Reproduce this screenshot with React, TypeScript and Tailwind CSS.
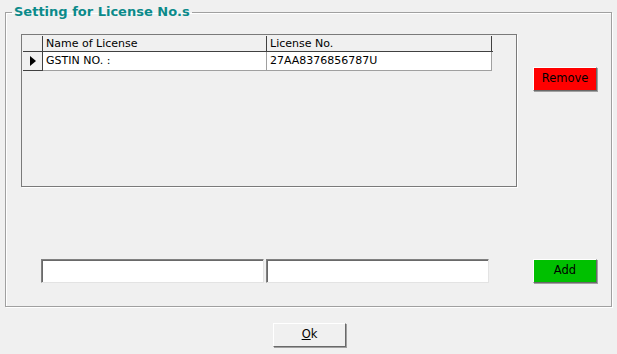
import React from 'react';

const font = { fontFamily: '"DejaVu Sans", Tahoma, sans-serif' };

function RaisedButton({ label, className }: { label: React.ReactNode; className: string }) {
  return (
    <button
      className={`flex items-center justify-center text-[11.5px] text-black border border-t-white border-l-white border-r-[#696969] border-b-[#696969] shadow-[1px_1px_0_#a0a0a0] ${className}`}
    >
      {label}
    </button>
  );
}

export default function App() {
  return (
    <div className="w-[617px] h-[354px] bg-[#f0f0f0] overflow-hidden" style={font}>
      <div className="pl-[5px] pr-[5px] pt-[3px]">
        <fieldset className="w-[607px] h-[304px] border border-[#a0a0a0] shadow-[1px_1px_0_#fff,inset_1px_1px_0_#fff] m-0 px-0 pb-0 pt-0">
          <legend className="ml-[6px] px-[2px] text-[13px] leading-[18px] font-bold text-[#0b8a8a]">
            Setting for License No.s
          </legend>
          <div className="flex mt-[13px]">
            <div className="ml-[15px] w-[496px] h-[153px] border border-[#7a7a7a] shadow-[1px_1px_0_#fff]">
              <div className="pl-px pt-px">
                <div className="flex w-[470px] h-[16px] border-b border-[#404040] text-[11px] leading-[15px]">
                  <div className="w-[20px] border-r border-[#404040]" />
                  <div className="w-[224px] border-r border-[#404040] pl-[3px]">Name of License</div>
                  <div className="w-[225px] border-r border-[#404040] pl-[3px]">License No.</div>
                </div>
                <div className="flex w-[470px] h-[19px] text-[11px] leading-[18px]">
                  <div className="w-[20px] border-r border-b border-[#404040] flex items-center justify-center">
                    <svg width="6" height="10" viewBox="0 0 6 10">
                      <path d="M0 0 L6 5 L0 10 Z" fill="#000" />
                    </svg>
                  </div>
                  <div className="w-[224px] bg-white border-r border-b border-[#a0a0a0] pl-[3px]">GSTIN NO. :</div>
                  <div className="w-[225px] bg-white border-r border-b border-[#a0a0a0] pl-[3px]">27AA8376856787U</div>
                </div>
              </div>
            </div>
            <div className="ml-[16px] mt-[33px]">
              <RaisedButton label="Remove" className="w-[64px] h-[24px] bg-[#ff0000]" />
            </div>
          </div>
          <div className="flex mt-[72px] items-start">
            <input className="ml-[35px] w-[223px] h-[24px] bg-white border border-t-[#808080] border-l-[#808080] border-r-[#e3e3e3] border-b-[#e3e3e3] shadow-[inset_1px_1px_0_#696969] outline-none" />
            <input className="ml-[2px] w-[223px] h-[24px] bg-white border border-t-[#808080] border-l-[#808080] border-r-[#e3e3e3] border-b-[#e3e3e3] shadow-[inset_1px_1px_0_#696969] outline-none" />
            <div className="ml-[44px]">
              <RaisedButton label="Add" className="w-[64px] h-[24px] bg-[#00c000]" />
            </div>
          </div>
        </fieldset>
      </div>
      <div className="flex justify-center mt-[16px] pl-[2px]">
        <RaisedButton
          label={<span><span className="underline">O</span>k</span>}
          className="w-[73px] h-[24px] bg-[#f0f0f0]"
        />
      </div>
    </div>
  );
}
